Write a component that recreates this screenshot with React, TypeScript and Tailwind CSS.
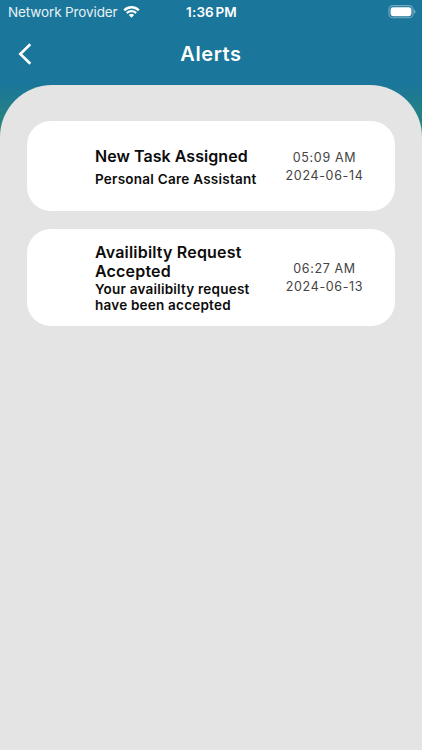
/*
 * App.tsx — the "Alerts" screen of the mobile app.
 *
 * A status bar and a title bar sit on the blue/green gradient, and a grey
 * sheet with rounded top corners holds one white card per alert.
 */

type Alert = {
  id: number;
  title: string[];
  body: string[];
  time: string;
  date: string;
};

const alerts: Alert[] = [
  {
    id: 1,
    title: ["New Task Assigned"],
    body: ["Personal Care Assistant"],
    time: "05:09 AM",
    date: "2024-06-14",
  },
  {
    id: 2,
    title: ["Availibilty Request", "Accepted"],
    body: ["Your availibilty request", "have been accepted"],
    time: "06:27 AM",
    date: "2024-06-13",
  },
];

function WifiIcon() {
  return (
    <svg viewBox="0 0 17 12" className="mb-[1px] h-[12px] w-[17px]" fill="white">
      <path d="M8.5 2.4c2.4 0 4.6.9 6.3 2.5.1.1.3.1.4 0l1.2-1.2c.1-.1.1-.3 0-.5a11.4 11.4 0 0 0-15.8 0c-.1.1-.1.3 0 .5l1.2 1.2c.1.1.3.1.4 0a9.1 9.1 0 0 1 6.3-2.5z" />
      <path d="M8.5 6.3c1.3 0 2.6.5 3.6 1.4.1.1.3.1.4 0l1.2-1.2c.1-.1.1-.3 0-.5a7.6 7.6 0 0 0-10.4 0c-.1.1-.1.3 0 .5l1.2 1.2c.1.1.3.1.4 0 1-.9 2.3-1.4 3.6-1.4z" />
      <path d="M10.9 9.3c.1-.1.1-.3 0-.5a3.7 3.7 0 0 0-4.8 0c-.1.1-.1.3 0 .5l2.1 2.1c.2.2.4.2.6 0z" />
    </svg>
  );
}

function BatteryIcon() {
  return (
    <svg viewBox="0 0 28 14" className="mb-[1px] h-[14px] w-[28px]">
      <rect x="1" y="0.6" width="24" height="12.2" rx="3.8" fill="none" stroke="white" strokeOpacity="0.4" strokeWidth="1.1" />
      <rect x="2.6" y="2.2" width="20.8" height="9" rx="2.4" fill="white" />
      <path d="M26.1 4.6v4.2c.8-.4 1.3-1.2 1.3-2.1s-.5-1.700-1.300-2.100z" fill="white" fillOpacity="0.45" />
    </svg>
  );
}

function StatusBar() {
  return (
    <div className="grid h-6 grid-cols-[1fr_auto_1fr] items-center pr-[6px] pl-2 text-white">
      <div className="flex items-center gap-[5px]">
        <span className="text-[13.5px] tracking-[-0.12px] whitespace-nowrap text-white/90">Network Provider</span>
        <WifiIcon />
      </div>
      <span className="pr-[1px] text-[13.5px] font-semibold tracking-[0.15px] [word-spacing:-2px]">1:36 PM</span>
      <div className="flex justify-end">
        <BatteryIcon />
      </div>
    </div>
  );
}

function TitleBar() {
  return (
    <header className="grid h-[61px] grid-cols-[1fr_auto_1fr] items-center px-[18px] pb-[1px] text-white">
      <button type="button" aria-label="Back" className="w-fit">
        <svg viewBox="0 0 14 22" className="h-[22px] w-[14px]" fill="none" stroke="white" strokeWidth="2.6">
          <path d="M12.3 1.2 2.3 11l10 9.8" />
        </svg>
      </button>
      <h1 className="text-[20px] leading-6 font-semibold tracking-[0.6px]">Alerts</h1>
    </header>
  );
}

function AlertCard({ alert }: { alert: Alert }) {
  const single = alert.title.length === 1;

  return (
    <li
      className={
        single
          ? "flex h-[90px] rounded-[24px] bg-white pt-[26px] pl-[68px]"
          : "flex h-[97px] rounded-[24px] bg-white pt-[14px] pl-[68px]"
      }
    >
      <div className="w-[180px] shrink-0 whitespace-nowrap text-[#0c0c0c]">
        <h2
          className={
            single
              ? "text-[16px] leading-[19px] font-semibold tracking-[0.05px]"
              : "text-[16px] leading-[19px] font-semibold tracking-[0.19px]"
          }
        >
          {alert.title.map((line) => (
            <span key={line} className="block">{line}</span>
          ))}
        </h2>
        <p
          className={
            single
              ? "mt-[5px] text-[13.5px] leading-4 font-semibold tracking-[0.25px]"
              : "text-[13.5px] leading-4 font-semibold tracking-[0.22px]"
          }
        >
          {alert.body.map((line) => (
            <span key={line} className="block">{line}</span>
          ))}
        </p>
      </div>
      <div
        className={
          single
            ? "mt-[2px] w-[99px] text-center text-[12.5px] leading-[18px] tracking-[0.65px] text-[#444]"
            : "mt-[17px] w-[99px] text-center text-[12.5px] leading-[18px] tracking-[0.65px] text-[#444]"
        }
      >
        <div>{alert.time}</div>
        <div>{alert.date}</div>
      </div>
    </li>
  );
}

export default function App() {
  return (
    <div className="flex h-[750px] w-[422px] flex-col overflow-hidden bg-[linear-gradient(to_bottom,#1a769a_0px,#1a769a_84px,#27837f_122px,#2c8a78_140px)] font-['Inter','Liberation_Sans',sans-serif]">
      <StatusBar />
      <TitleBar />
      <main className="flex-1 rounded-t-[52px] bg-[#e4e4e4] px-[27px] pt-[36px]">
        <ul className="flex flex-col gap-[18px]">
          {alerts.map((alert) => (
            <AlertCard key={alert.id} alert={alert} />
          ))}
        </ul>
      </main>
    </div>
  );
}
